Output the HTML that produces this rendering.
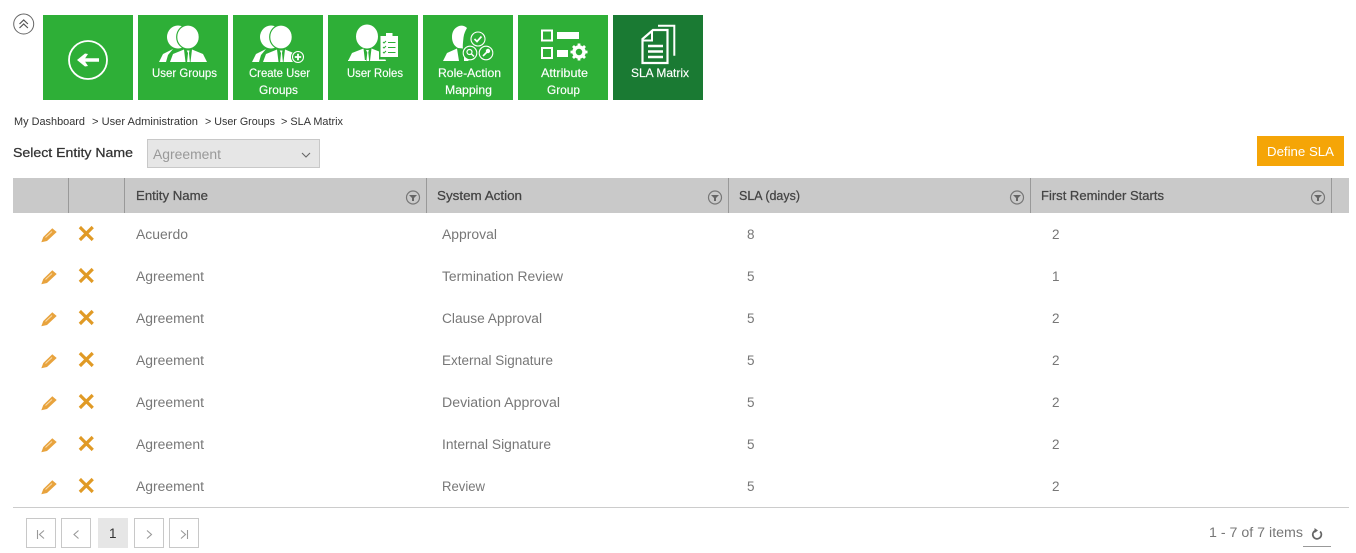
<!DOCTYPE html>
<html><head><meta charset="utf-8"><title>SLA Matrix</title>
<style>
html,body{margin:0;padding:0;background:#fff;width:1356px;height:553px;overflow:hidden}
svg{display:block;position:absolute;left:0;top:0}
text{font-family:"Liberation Sans",sans-serif;font-size:13px}
.t{fill:#fff;font-size:12px;stroke:#fff;stroke-width:.15}
.b{fill:#333;font-size:11px}
.h{fill:#444;font-size:13px;stroke:#444;stroke-width:.25}
.r{fill:#777;font-size:13.5px}
</style></head><body>
<svg width="1356" height="553" viewBox="0 0 1356 553" xmlns="http://www.w3.org/2000/svg">
<defs>
<g id="ico">
  <path d="M41.300 242.300L43.300 237 52.300 228.300 56.700 232 47 241z" fill="#e8a33d"/>
  <path d="M45.500 237.500l6.500-6" stroke="#f8dcae" stroke-width="1" fill="none"/>
  <path d="M81 228.200l10.600 10.600M91.600 228.200L81 238.800" stroke="#e09a25" stroke-width="3.200" stroke-linecap="square" fill="none"/>
</g>
<g id="flt">
  <circle cx="0" cy="0" r="6.500" fill="none" stroke="#777" stroke-width="1.200"/>
  <path d="M-4-2.500H4L1 .5V3.500H-1V.5z" fill="#666"/>
</g>
<g id="grp">
  <ellipse cx="178" cy="37" rx="11" ry="11.500" fill="#fff"/>
  <ellipse cx="188" cy="37" rx="11.300" ry="12" fill="#fff" stroke="#2eaf37" stroke-width="1.200"/>
  <path d="M159 62l4-8 10-5-5 6-2 7zM170 62l3-8 11-4.500 1.500 12.500zM207 62l-4-8-11-4.500-1.500 12.500z" fill="#fff"/>
  <path d="M186.700 50.500h2.800l-.5 2.500.9 9h-2.800l.9-9z" fill="#fff"/>
</g>
</defs>

<!-- collapse -->
<circle cx="23.700" cy="24" r="10" fill="#fff" stroke="#666" stroke-width="1"/>
<path d="M19.500 24l4.200-4 4.200 4M19.500 28l4.200-4 4.200 4" fill="none" stroke="#555" stroke-width="1.200"/>

<!-- tiles -->
<rect x="43" y="15" width="90" height="85" fill="#2eaf37"/>
<rect x="138" y="15" width="90" height="85" fill="#2eaf37"/>
<rect x="233" y="15" width="90" height="85" fill="#2eaf37"/>
<rect x="328" y="15" width="90" height="85" fill="#2eaf37"/>
<rect x="423" y="15" width="90" height="85" fill="#2eaf37"/>
<rect x="518" y="15" width="90" height="85" fill="#2eaf37"/>
<rect x="613" y="15" width="90" height="85" fill="#1a7a33"/>

<!-- back -->
<circle cx="88" cy="60" r="19" fill="none" stroke="#fff" stroke-width="1.800"/>
<path d="M99 60H82" stroke="#fff" stroke-width="3.600" fill="none"/>
<path d="M85 53.500L77 60l8 6.500 3-.5-4-6 4-6z" fill="#fff"/>

<!-- user groups -->
<use href="#grp"/>
<use href="#grp" x="93"/>
<circle cx="298" cy="57" r="7" fill="#2eaf37"/>
<circle cx="298" cy="57" r="5.500" fill="none" stroke="#fff" stroke-width="1.100"/>
<path d="M294.800 57h6.400M298 53.800v6.400" stroke="#fff" stroke-width="1.800"/>

<!-- user roles -->
<ellipse cx="367" cy="36.500" rx="11" ry="12" fill="#fff"/>
<path d="M348 61l4-8 11.500-4.500 1.500 12.500zM386 61l-3-8-11.500-4.500-1.500 12.500z" fill="#fff"/>
<path d="M366 50h2.800l-.5 2.500.9 8.500h-2.800l.9-8.500z" fill="#fff"/>
<rect x="379" y="34.500" width="20.500" height="25" fill="#2eaf37"/>
<rect x="380.500" y="36" width="17.500" height="21" fill="#fff"/>
<rect x="386" y="33" width="6.500" height="4.500" fill="#fff"/>
<path d="M383 42l1 1 2-2M383 47l1 1 2-2M383 52l1 1 2-2" stroke="#2eaf37" stroke-width="1" fill="none"/>
<path d="M388 42.500h7.500M388 47.500h7.500M388 52.500h7.500" stroke="#2eaf37" stroke-width="1.100"/>
<rect x="348" y="60" width="18" height="1" fill="#fff"/>

<!-- role-action -->
<path d="M467 28c-2-2-5-3-8-2-5 2-7 6-7 11 0 5 2 9 6 11l5 .5c-.5-2 0-6 .5-11 .5-4 2-7 3.500-9.500z" fill="#fff"/>
<path d="M443 61l4-8 10-4.500 2 12.500zM464 61v-11l2-1 1.500 5 1 7z" fill="#fff"/>
<circle cx="478" cy="39" r="7" fill="none" stroke="#fff" stroke-width="1.100"/>
<circle cx="470" cy="53" r="6.800" fill="#2eaf37" stroke="#fff" stroke-width="1.100"/>
<circle cx="486" cy="53" r="6.800" fill="#2eaf37" stroke="#fff" stroke-width="1.100"/>
<path d="M474.500 39l2.500 2.500 4.500-5" fill="none" stroke="#fff" stroke-width="1.700"/>
<circle cx="469.500" cy="52" r="2.500" fill="none" stroke="#fff" stroke-width="1.200"/>
<path d="M471.500 54l2.500 2.500" stroke="#fff" stroke-width="1.500"/>
<circle cx="488" cy="51" r="2.200" fill="#fff"/>
<path d="M487 52l-4 4" stroke="#fff" stroke-width="1.600"/>

<!-- attribute -->
<rect x="542" y="30.500" width="10" height="10" fill="none" stroke="#fff" stroke-width="2"/>
<rect x="542" y="48" width="10" height="10" fill="none" stroke="#fff" stroke-width="2"/>
<rect x="557" y="32" width="22" height="7" fill="#fff"/>
<rect x="557" y="50" width="11" height="7" fill="#fff"/>
<circle cx="579" cy="52" r="5" fill="none" stroke="#fff" stroke-width="3.500"/>
<path d="M579 43.500v17M570.500 52h17M573 46l12 12M585 46l-12 12" stroke="#fff" stroke-width="2.800" stroke-dasharray="2.800 11.400"/>

<!-- sla -->
<path d="M658 25.700h16.300v30" fill="none" stroke="#fff" stroke-width="2"/>
<path d="M653 30h14.500v33H642.500V39z" fill="#1a7a33" stroke="#fff" stroke-width="2.200"/>
<path d="M652 31v9.500h-9" fill="none" stroke="#fff" stroke-width="2"/>
<path d="M648 46h15M648 51.500h15M648 57h15" stroke="#fff" stroke-width="2.500"/>

<!-- tile labels -->
<text class="t" x="152" y="77" textLength="65" lengthAdjust="spacingAndGlyphs">User Groups</text>
<text class="t" x="249" y="77" textLength="61" lengthAdjust="spacingAndGlyphs">Create User</text>
<text class="t" x="259" y="94" textLength="39" lengthAdjust="spacingAndGlyphs">Groups</text>
<text class="t" x="347" y="77" textLength="56" lengthAdjust="spacingAndGlyphs">User Roles</text>
<text class="t" x="438" y="77" textLength="63" lengthAdjust="spacingAndGlyphs">Role-Action</text>
<text class="t" x="445" y="94" textLength="47" lengthAdjust="spacingAndGlyphs">Mapping</text>
<text class="t" x="541" y="77" textLength="47" lengthAdjust="spacingAndGlyphs">Attribute</text>
<text class="t" x="547" y="94" textLength="33" lengthAdjust="spacingAndGlyphs">Group</text>
<text class="t" x="631" y="77" textLength="58" lengthAdjust="spacingAndGlyphs">SLA Matrix</text>

<!-- breadcrumb -->
<text class="b" x="14" y="125" textLength="71" lengthAdjust="spacingAndGlyphs">My Dashboard</text>
<text class="b" x="92" y="125" textLength="106" lengthAdjust="spacingAndGlyphs">&gt; User Administration</text>
<text class="b" x="205" y="125" textLength="70" lengthAdjust="spacingAndGlyphs">&gt; User Groups</text>
<text class="b" x="281" y="125" textLength="62" lengthAdjust="spacingAndGlyphs">&gt; SLA Matrix</text>

<!-- filter row -->
<text x="13" y="157" fill="#333" stroke="#333" stroke-width=".25" textLength="120" lengthAdjust="spacingAndGlyphs">Select Entity Name</text>
<rect x="147.500" y="139.500" width="172" height="28" fill="#e6e6e6" stroke="#c8c8c8"/>
<text x="153" y="159" fill="#999" textLength="68" lengthAdjust="spacingAndGlyphs" style="font-size:13.500px">Agreement</text>
<path d="M302 153l4 4 4-4" fill="none" stroke="#666" stroke-width="1.100"/>
<rect x="1257" y="136" width="87" height="30" fill="#f5a507"/>
<text x="1267" y="156" fill="#fff" textLength="67" lengthAdjust="spacingAndGlyphs">Define SLA</text>

<!-- table head -->
<rect x="13" y="178" width="1336" height="35" fill="#c9c9c9"/>
<path d="M68.500 178v35M124.500 178v35M426.500 178v35M728.500 178v35M1030.500 178v35M1331.500 178v35" stroke="#999" stroke-width="1"/>
<text class="h" x="136" y="200" textLength="72" lengthAdjust="spacingAndGlyphs">Entity Name</text>
<text class="h" x="437" y="200" textLength="85" lengthAdjust="spacingAndGlyphs">System Action</text>
<text class="h" x="739" y="200" textLength="61" lengthAdjust="spacingAndGlyphs">SLA (days)</text>
<text class="h" x="1041" y="200" textLength="123" lengthAdjust="spacingAndGlyphs">First Reminder Starts</text>
<use href="#flt" x="413" y="197.500"/>
<use href="#flt" x="715" y="197.500"/>
<use href="#flt" x="1017" y="197.500"/>
<use href="#flt" x="1318" y="197.500"/>

<!-- rows -->
<use href="#ico"/><use href="#ico" y="42"/><use href="#ico" y="84"/><use href="#ico" y="126"/><use href="#ico" y="168"/><use href="#ico" y="210"/><use href="#ico" y="252"/>

<text class="r" x="136" y="239" textLength="52" lengthAdjust="spacingAndGlyphs">Acuerdo</text>
<text class="r" x="442" y="239" textLength="55" lengthAdjust="spacingAndGlyphs">Approval</text>
<text class="r" x="747" y="239">8</text>
<text class="r" x="1052" y="239">2</text>

<text class="r" x="136" y="281" textLength="68" lengthAdjust="spacingAndGlyphs">Agreement</text>
<text class="r" x="442" y="281" textLength="121" lengthAdjust="spacingAndGlyphs">Termination Review</text>
<text class="r" x="747" y="281">5</text>
<text class="r" x="1052" y="281">1</text>

<text class="r" x="136" y="323" textLength="68" lengthAdjust="spacingAndGlyphs">Agreement</text>
<text class="r" x="442" y="323" textLength="100" lengthAdjust="spacingAndGlyphs">Clause Approval</text>
<text class="r" x="747" y="323">5</text>
<text class="r" x="1052" y="323">2</text>

<text class="r" x="136" y="365" textLength="68" lengthAdjust="spacingAndGlyphs">Agreement</text>
<text class="r" x="442" y="365" textLength="111" lengthAdjust="spacingAndGlyphs">External Signature</text>
<text class="r" x="747" y="365">5</text>
<text class="r" x="1052" y="365">2</text>

<text class="r" x="136" y="407" textLength="68" lengthAdjust="spacingAndGlyphs">Agreement</text>
<text class="r" x="442" y="407" textLength="118" lengthAdjust="spacingAndGlyphs">Deviation Approval</text>
<text class="r" x="747" y="407">5</text>
<text class="r" x="1052" y="407">2</text>

<text class="r" x="136" y="449" textLength="68" lengthAdjust="spacingAndGlyphs">Agreement</text>
<text class="r" x="442" y="449" textLength="109" lengthAdjust="spacingAndGlyphs">Internal Signature</text>
<text class="r" x="747" y="449">5</text>
<text class="r" x="1052" y="449">2</text>

<text class="r" x="136" y="491" textLength="68" lengthAdjust="spacingAndGlyphs">Agreement</text>
<text class="r" x="442" y="491" textLength="43" lengthAdjust="spacingAndGlyphs">Review</text>
<text class="r" x="747" y="491">5</text>
<text class="r" x="1052" y="491">2</text>

<!-- footer -->
<rect x="13" y="507" width="1336" height="1" fill="#ccc"/>
<rect x="26.500" y="518.500" width="29" height="29" fill="#fff" stroke="#c8c8c8"/>
<rect x="61.500" y="518.500" width="29" height="29" fill="#fff" stroke="#c8c8c8"/>
<rect x="98" y="518" width="30" height="30" fill="#e6e6e6"/>
<rect x="134.500" y="518.500" width="29" height="29" fill="#fff" stroke="#c8c8c8"/>
<rect x="169.500" y="518.500" width="29" height="29" fill="#fff" stroke="#c8c8c8"/>
<path d="M37.500 530v9M44 530.500l-4.500 4 4.500 4M78.500 530.500l-4.500 4 4.500 4M147 530.500l4.500 4-4.500 4M181 530.500l4.500 4-4.500 4M187.500 530v9" fill="none" stroke="#999" stroke-width="1.100"/>
<text x="109" y="538" fill="#333" style="font-size:13.500px">1</text>
<text x="1209" y="537" fill="#777" textLength="94" lengthAdjust="spacingAndGlyphs" style="font-size:13.500px">1 - 7 of 7 items</text>
<path d="M1315.600 530.500a4.300 4.300 0 1 0 4.500 1" fill="none" stroke="#666" stroke-width="1.700"/>
<path d="M1314.500 528l3.500 2.500-3.500 2.500z" fill="#666"/>
<rect x="1303" y="546" width="28" height="1" fill="#999"/>
</svg>
</body></html>
